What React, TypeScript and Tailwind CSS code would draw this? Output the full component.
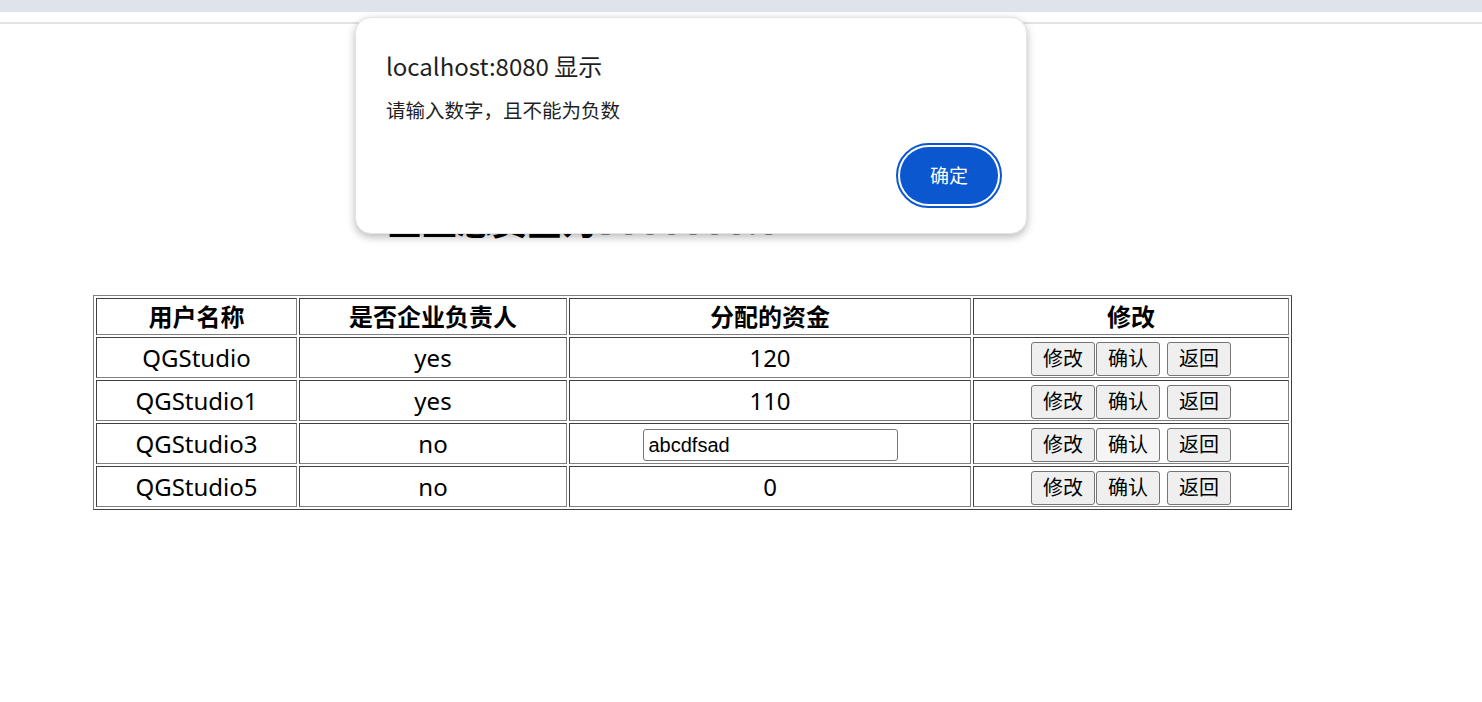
const rows = [
  { name: 'QGStudio', leader: 'yes', fund: '120', editing: false },
  { name: 'QGStudio1', leader: 'yes', fund: '110', editing: false },
  { name: 'QGStudio3', leader: 'no', fund: 'abcdfsad', editing: true },
  { name: 'QGStudio5', leader: 'no', fund: '0', editing: false },
];

const cell =
  'border border-t-[#404040] border-l-[#404040] border-r-[#808080] border-b-[#808080] p-px text-center align-middle';

const btn =
  'h-[34px] px-[11px] text-[20px] leading-none border border-[#767676] rounded-[3px] text-black align-middle';

function AlertDialog() {
  return (
    <div className="absolute left-[355px] top-[17px] w-[672px] h-[217px] rounded-[16px] bg-white border border-[#e4e4e4] shadow-[0_3px_8px_rgba(0,0,0,0.28)] pl-[30px] pr-[28px] pt-[34px] font-['Noto_Sans_CJK_SC',sans-serif] text-[#1f1f1f]">
      <div className="h-[28px] text-[24px] leading-[28px] whitespace-nowrap">localhost:8080 显示</div>
      <div className="mt-[20px] h-[20px] text-[19.5px] leading-[20px] whitespace-nowrap">请输入数字，且不能为负数</div>
      <div className="mt-[27px] flex justify-end">
        <button className="w-[98px] h-[57px] rounded-full bg-[#0b57d0] text-white text-[19px] outline-2 outline-[#0b57d0] outline-offset-2">
          确定
        </button>
      </div>
    </div>
  );
}

export default function App() {
  return (
    <div className="relative w-[1482px] h-[702px] bg-white overflow-hidden font-['Noto_Sans','Noto_Sans_CJK_SC',sans-serif] text-black">
      <div className="h-[12px] bg-[#dfe3ec]" />
      <div className="h-[10px] bg-white" />
      <div className="h-[2px] bg-[#e3e3e3]" />

      <h1 className="mt-[172px] pl-[387px] h-[52px] text-[35px] leading-[52px] font-bold whitespace-nowrap">
        企业总资金为<span className="font-normal text-[#8c8c8c] tracking-[1.5px]">5000000.0</span>
      </h1>

      <table className="mt-[47px] ml-[93px] w-[1199px] table-fixed border-separate border-spacing-[2px] border border-t-[#808080] border-l-[#808080] border-r-[#404040] border-b-[#404040] text-[24px]">
        <thead>
          <tr>
            <th className={`${cell} w-[201px] h-[37px] leading-[30px] font-bold`}>用户名称</th>
            <th className={`${cell} w-[268px] h-[37px] leading-[30px] font-bold`}>是否企业负责人</th>
            <th className={`${cell} w-[402px] h-[37px] leading-[30px] font-bold`}>分配的资金</th>
            <th className={`${cell} w-[316px] h-[37px] leading-[30px] font-bold`}>修改</th>
          </tr>
        </thead>
        <tbody>
          {rows.map((r) => (
            <tr key={r.name}>
              <td className={`${cell} h-[41px] leading-[34px]`}>{r.name}</td>
              <td className={`${cell} h-[41px] leading-[34px]`}>{r.leader}</td>
              <td className={`${cell} h-[41px] leading-[34px]`}>
                {r.editing ? (
                  <input
                    defaultValue={r.fund}
                    className="w-[255px] h-[32px] px-[5px] align-middle border border-[#767676] rounded-[3px] font-['Liberation_Sans',sans-serif] text-[20px] text-black"
                  />
                ) : (
                  r.fund
                )}
              </td>
              <td className={`${cell} h-[41px] leading-[34px] whitespace-nowrap`}>
                <button className={`${btn} bg-[#efefef]`}>修改</button>
                <button className={`${btn} ml-[1px] ${r.editing ? 'bg-[#f5f5f5]' : 'bg-[#efefef]'}`}>确认</button>
                <button className={`${btn} ml-[7px] bg-[#efefef]`}>返回</button>
              </td>
            </tr>
          ))}
        </tbody>
      </table>

      <AlertDialog />
    </div>
  );
}
